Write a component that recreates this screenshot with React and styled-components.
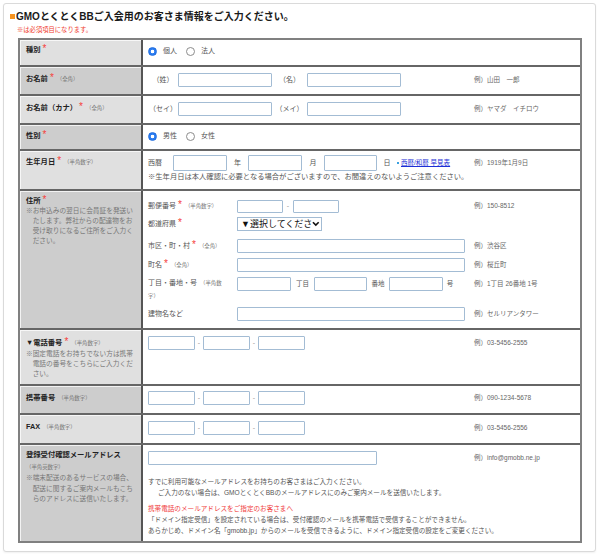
import React from "react";
import styled, { createGlobalStyle, css } from "styled-components";

const GlobalStyle = createGlobalStyle`
  html, body {
    margin: 0;
    padding: 0;
    background: #fff;
  }
  body {
    font-family: "Liberation Sans", "Noto Sans CJK JP", sans-serif;
    color: #333;
  }
`;

const Card = styled.div`
  box-sizing: border-box;
  width: 593px;
  height: 549px;
  margin: 3px;
  padding: 7px 13px 0 6px;
  background: #fff;
  border: 1px solid #dadada;
  border-radius: 3px;
  box-shadow: 0 1px 2px rgba(0, 0, 0, 0.06);
`;

const Heading = styled.h1`
  display: flex;
  align-items: center;
  margin: 0;
  font-size: 10px;
  line-height: 12px;
  font-weight: bold;
  color: #1a1a1a;
`;

const Mark = styled.span`
  flex: none;
  width: 5px;
  height: 5px;
  margin: 0 1px 4px 0;
  align-self: flex-end;
  background: #f7931e;
`;

const RequiredNote = styled.p`
  margin: 3px 0 0 7px;
  font-size: 6.3px;
  line-height: 8px;
  color: #ef3b2d;
`;

const Table = styled.div`
  box-sizing: border-box;
  width: 564px;
  margin: 4px 0 0 8px;
  border: 2px solid #808080;
`;

const Row = styled.div`
  display: grid;
  grid-template-columns: 123px 1fr;
  box-sizing: border-box;
  height: ${(p) => p.$h}px;

  & + & {
    border-top: 2px solid #666;
  }
`;

const Label = styled.div`
  box-sizing: border-box;
  padding: ${(p) => p.$pt ?? 6}px 6px 0;
  background: ${(p) => (p.$shade ? "#cdcdcd" : "#e0e0e0")};
  border-right: 2px solid #555;
  box-shadow: inset 1px 1px 0 rgba(255, 255, 255, 0.75);
  font-size: 7.3px;
  line-height: 10px;
  color: #222;
`;

const Name = styled.span`
  font-weight: bold;
`;

const Req = styled.span`
  margin-left: 2px;
  font-family: "Liberation Sans", sans-serif;
  font-size: 10px;
  line-height: 0;
  color: #f5413a;
`;

const Sub = styled.span`
  display: ${(p) => (p.$block ? "block" : "inline")};
  margin-left: ${(p) => (p.$block ? 0 : 3)}px;
  font-size: 5.4px;
  font-weight: normal;
  color: #777;
`;

const SubLine = styled.div`
  margin-top: 2px;
  font-size: 5.4px;
  color: #777;
`;

const Note = styled.p`
  margin: ${(p) => p.$mt ?? 1}px 0 0;
  padding-left: 6.7px;
  text-indent: -6.7px;
  font-size: 6.7px;
  line-height: ${(p) => p.$lh ?? 10}px;
  color: #777;
`;

const Value = styled.div`
  box-sizing: border-box;
  padding: ${(p) => p.$pt ?? 6}px 0 0 5px;
  font-size: 7px;
  line-height: 10px;
  color: #555;
`;

const Line = styled.div`
  display: grid;
  grid-template-columns: 326px 1fr;
  align-items: ${(p) => (p.$top ? "start" : "center")};
  min-height: ${(p) => p.$h ?? 14}px;
  margin-top: ${(p) => p.$mt ?? 0}px;
`;

const Fields = styled.div`
  display: flex;
  align-items: ${(p) => (p.$top ? "flex-start" : "center")};
`;

const Unit = styled.span`
  flex: none;
  width: ${(p) => p.$w}px;
  text-align: ${(p) => p.$align || "center"};
  font-size: ${(p) => (p.$small ? 6.5 : 7)}px;
  line-height: 14px;
  color: ${(p) => (p.$dash ? "#999" : "#555")};
`;

const Field = styled.input`
  flex: none;
  box-sizing: border-box;
  width: ${(p) => p.$w}px;
  height: ${(p) => p.$h ?? 14}px;
  margin: 0;
  padding: 0 2px;
  border: 1px solid #a3bcd4;
  border-radius: 1px;
  background: #fff;
  outline: none;
`;

const Example = styled.span`
  font-size: 6.5px;
  line-height: 14px;
  color: #666;
  white-space: nowrap;
`;

const Radio = styled.span`
  flex: none;
  box-sizing: border-box;
  width: 9px;
  height: 9px;
  border-radius: 50%;
  ${(p) =>
    p.$on
      ? css`
          background: radial-gradient(circle, #fff 0 1.5px, #2b7cf0 2.1px);
          border: 1px solid #1f6de0;
        `
      : css`
          background: #fff;
          border: 1px solid #8c8c8c;
        `}
`;

const Choice = styled.span`
  margin: 0 9px 0 6px;
  font-size: 7px;
  color: #555;
`;

const Dot = styled.span`
  flex: none;
  width: 2px;
  height: 2px;
  margin-right: 2px;
  background: #3aa0e0;
`;

const ChartLink = styled.a`
  font-size: 6.5px;
  color: #1c2fd6;
  text-decoration: underline;
  white-space: nowrap;
`;

const Caution = styled.p`
  margin: 1px 0 0;
  font-size: 7.3px;
  line-height: 10px;
  color: #555;
  white-space: nowrap;
`;

const AddrLabel = styled.span`
  flex: none;
  width: 86px;
  margin-right: 3px;
  font-size: 7px;
  line-height: 12.5px;
  color: #555;
  white-space: nowrap;
`;

const Select = styled.div`
  display: flex;
  align-items: center;
  box-sizing: border-box;
  width: 85px;
  height: 14px;
  padding: 0 1px 0 3px;
  border: 1px solid #a3bcd4;
  background: #fff;
  font-size: 9px;
  line-height: 12px;
  color: #111;
`;

const SelectText = styled.span`
  flex: 1;
  white-space: nowrap;
`;

const Text = styled.p`
  margin: ${(p) => p.$mt ?? 0}px 0 0;
  padding-left: ${(p) => (p.$indent ? 10 : 0)}px;
  font-size: 6.6px;
  line-height: 11px;
  color: ${(p) => (p.$red ? "#f03c3c" : "#555")};
  white-space: nowrap;
`;

const Chevron = () => (
  <svg width="8" height="6" viewBox="0 0 8 6">
    <path d="M1 1.2 L4 4.2 L7 1.2" fill="none" stroke="#111" strokeWidth="1.7" />
  </svg>
);

const PhoneFields = () => (
  <Fields>
    <Field $w={47} />
    <Unit $w={8} $dash>-</Unit>
    <Field $w={47} />
    <Unit $w={8} $dash>-</Unit>
    <Field $w={47} />
  </Fields>
);

const App = () => (
  <>
    <GlobalStyle />
    <Card>
      <Heading>
        <Mark />
        GMOとくとくBBご入会用のお客さま情報をご入力ください。
      </Heading>
      <RequiredNote>※は必須項目になります。</RequiredNote>

      <Table>
        <Row $h={25}>
          <Label $pt={5}>
            <Name>種別</Name>
            <Req>*</Req>
          </Label>
          <Value>
            <Line $h={9}>
              <Fields>
                <Radio $on />
                <Choice>個人</Choice>
                <Radio />
                <Choice>法人</Choice>
              </Fields>
            </Line>
          </Value>
        </Row>

        <Row $h={29}>
          <Label $shade $pt={7}>
            <Name>お名前</Name>
            <Req>*</Req>
            <Sub>（全角）</Sub>
          </Label>
          <Value>
            <Line>
              <Fields>
                <Unit $w={30}>（姓）</Unit>
                <Field $w={94} />
                <Unit $w={35}>（名）</Unit>
                <Field $w={94} />
              </Fields>
              <Example>例）山田　一郎</Example>
            </Line>
          </Value>
        </Row>

        <Row $h={29}>
          <Label $pt={7}>
            <Name>お名前（カナ）</Name>
            <Req>*</Req>
            <Sub>（全角）</Sub>
          </Label>
          <Value>
            <Line>
              <Fields>
                <Unit $w={30}>（セイ）</Unit>
                <Field $w={94} />
                <Unit $w={35}>（メイ）</Unit>
                <Field $w={94} />
              </Fields>
              <Example>例）ヤマダ　イチロウ</Example>
            </Line>
          </Value>
        </Row>

        <Row $h={26}>
          <Label $shade>
            <Name>性別</Name>
            <Req>*</Req>
          </Label>
          <Value>
            <Line $h={9}>
              <Fields>
                <Radio $on />
                <Choice>男性</Choice>
                <Radio />
                <Choice>女性</Choice>
              </Fields>
            </Line>
          </Value>
        </Row>

        <Row $h={40}>
          <Label>
            <Name>生年月日</Name>
            <Req>*</Req>
            <Sub>（半角数字）</Sub>
          </Label>
          <Value $pt={4}>
            <Line $h={16}>
              <Fields>
                <Unit $w={25} $align="left">西暦</Unit>
                <Field $w={54} $h={16} />
                <Unit $w={21}>年</Unit>
                <Field $w={54} $h={16} />
                <Unit $w={22}>月</Unit>
                <Field $w={53} $h={16} />
                <Unit $w={20}>日</Unit>
                <Dot />
                <ChartLink href="#">西暦/和暦 早見表</ChartLink>
              </Fields>
              <Example>例）1919年1月9日</Example>
            </Line>
            <Caution>
              ※生年月日は本人確認に必要となる場合がございますので、お間違えのないようご注意ください。
            </Caution>
          </Value>
        </Row>

        <Row $h={139}>
          <Label $shade $pt={5}>
            <Name>住所</Name>
            <Req>*</Req>
            <Note $mt={0}>
              ※お申込みの翌日に会員証を発送いたします。弊社からの配達物をお受け取りになるご住所をご入力ください。
            </Note>
          </Label>
          <Value $pt={8}>
            <Line $h={13}>
              <Fields>
                <AddrLabel>
                  郵便番号<Req>*</Req>
                  <Sub>（半角数字）</Sub>
                </AddrLabel>
                <Field $w={46} $h={13} />
                <Unit $w={10} $dash>-</Unit>
                <Field $w={46} $h={13} />
              </Fields>
              <Example>例）150-8512</Example>
            </Line>
            <Line $mt={4}>
              <Fields>
                <AddrLabel>
                  都道府県<Req>*</Req>
                </AddrLabel>
                <Select>
                  <SelectText>▼選択してくださ</SelectText>
                  <Chevron />
                </Select>
              </Fields>
            </Line>
            <Line $mt={8}>
              <Fields>
                <AddrLabel>
                  市区・町・村<Req>*</Req>
                  <Sub>（全角）</Sub>
                </AddrLabel>
                <Field $w={228} />
              </Fields>
              <Example>例）渋谷区</Example>
            </Line>
            <Line $mt={5}>
              <Fields>
                <AddrLabel>
                  町名<Req>*</Req>
                  <Sub>（全角）</Sub>
                </AddrLabel>
                <Field $w={228} />
              </Fields>
              <Example>例）桜丘町</Example>
            </Line>
            <Line $mt={5} $top>
              <Fields $top>
                <AddrLabel>
                  丁目・番地・号<Sub>（半角数</Sub>
                  <Sub $block>字）</Sub>
                </AddrLabel>
                <Field $w={54} />
                <Unit $w={23} $small>丁目</Unit>
                <Field $w={53} />
                <Unit $w={22} $small>番地</Unit>
                <Field $w={54} />
                <Unit $w={14} $small>号</Unit>
              </Fields>
              <Example>例）1丁目 26番地 1号</Example>
            </Line>
            <Line $mt={5}>
              <Fields>
                <AddrLabel>建物名など</AddrLabel>
                <Field $w={228} />
              </Fields>
              <Example>例）セルリアンタワー</Example>
            </Line>
          </Value>
        </Row>

        <Row $h={56}>
          <Label $pt={8}>
            <Name>▼電話番号</Name>
            <Req>*</Req>
            <Sub>（半角数字）</Sub>
            <Note>
              ※固定電話をお持ちでない方は携帯電話の番号をこちらにご入力ください。
            </Note>
          </Label>
          <Value>
            <Line>
              <PhoneFields />
              <Example>例）03-5456-2555</Example>
            </Line>
          </Value>
        </Row>

        <Row $h={29}>
          <Label $shade $pt={7}>
            <Name>携帯番号</Name>
            <Sub>（半角数字）</Sub>
          </Label>
          <Value $pt={5}>
            <Line>
              <PhoneFields />
              <Example>例）090-1234-5678</Example>
            </Line>
          </Value>
        </Row>

        <Row $h={30}>
          <Label $pt={7}>
            <Name>FAX</Name>
            <Sub>（半角数字）</Sub>
          </Label>
          <Value>
            <Line>
              <PhoneFields />
              <Example>例）03-5456-2556</Example>
            </Line>
          </Value>
        </Row>

        <Row $h={98}>
          <Label $shade $pt={5}>
            <Name>登録受付確認メールアドレス</Name>
            <SubLine>（半角英数字）</SubLine>
            <Note $lh={10.5}>
              ※端末配送のあるサービスの場合、配送に関するご案内メールもこちらのアドレスに送信いたします。
            </Note>
          </Label>
          <Value>
            <Line>
              <Fields>
                <Field $w={229} />
              </Fields>
              <Example>例）info@gmobb.ne.jp</Example>
            </Line>
            <Text $mt={11}>
              すでに利用可能なメールアドレスをお持ちのお客さまはご入力ください。
            </Text>
            <Text $indent>
              ご入力のない場合は、GMOとくとくBBのメールアドレスにのみご案内メールを送信いたします。
            </Text>
            <Text $mt={5} $red>
              携帯電話のメールアドレスをご指定のお客さまへ
            </Text>
            <Text>
              「ドメイン指定受信」を設定されている場合は、受付確認のメールを携帯電話で受信することができません。
            </Text>
            <Text>
              あらかじめ、ドメイン名「gmobb.jp」からのメールを受信できるように、ドメイン指定受信の設定をご変更ください。
            </Text>
          </Value>
        </Row>
      </Table>
    </Card>
  </>
);

export default App;
